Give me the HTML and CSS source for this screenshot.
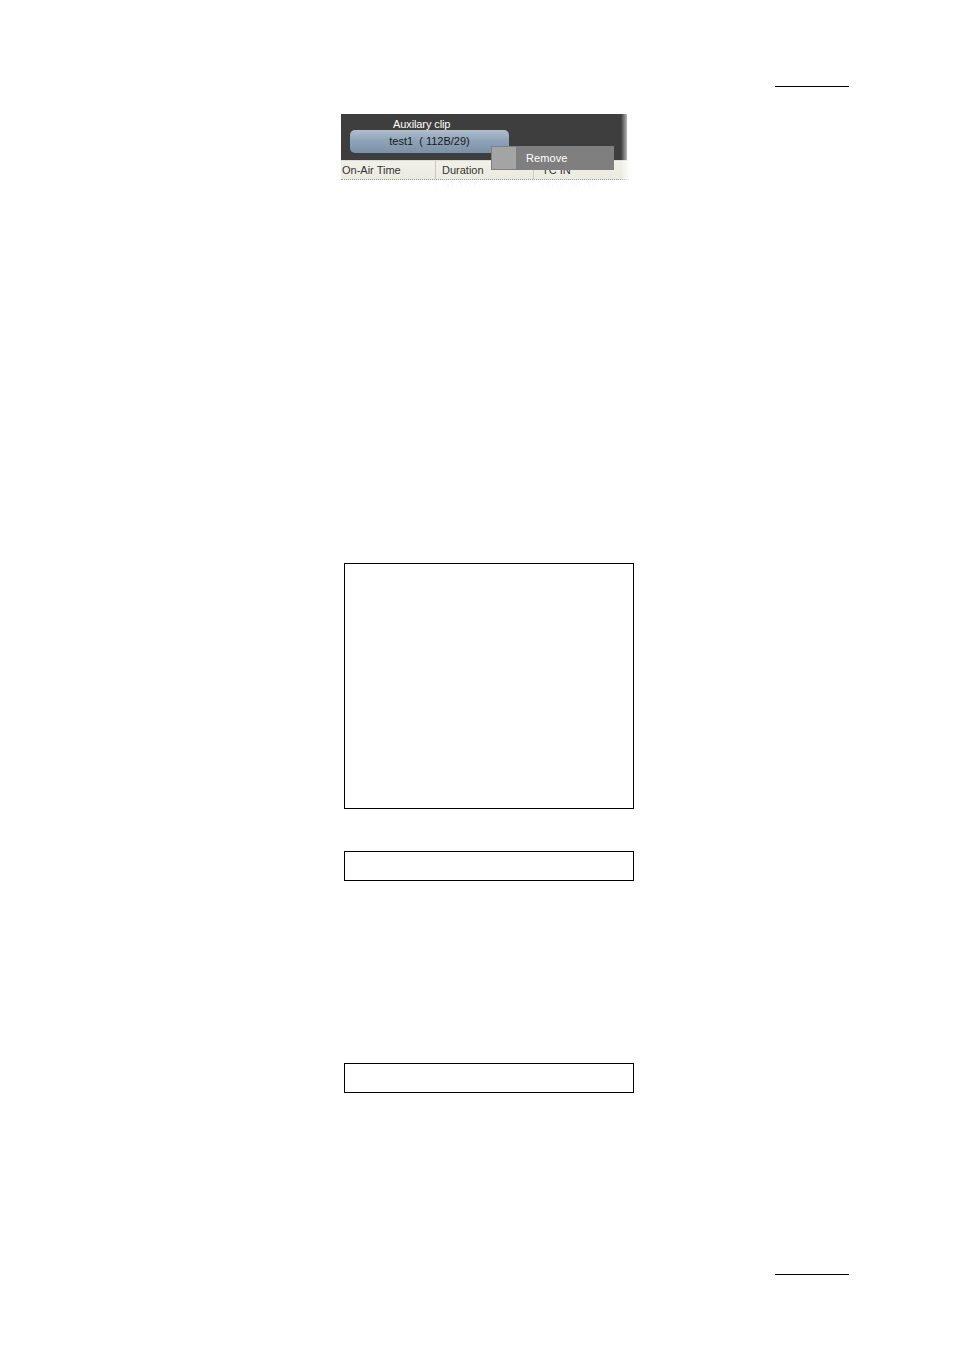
FILE: index.html
```html
<!DOCTYPE html>
<html>
<head>
<meta charset="utf-8">
<link rel="stylesheet" href="styles.css">
</head>
<body>
<div class="page">
  <div class="rule-row top"><div class="rule"></div></div>

  <div class="shot">
    <div class="panel">
      <div class="panel-label">Auxilary clip</div>
      <div class="clip-btn">test1&nbsp; ( 112B/29)</div>
    </div>
    <div class="grid-head">
      <div class="col c1">On-Air Time</div>
      <div class="col c2">Duration</div>
      <div class="col c3">TC IN</div>
    </div>
    <div class="grid-ghost">
      <div class="col c1"></div>
      <div class="col c2">00:00:00</div>
      <div class="col c3">00:00:00:00</div>
    </div>
    <div class="menu">
      <div class="menu-icon"></div>
      <div class="menu-text">Remove</div>
    </div>
    <div class="fade-right"></div>
  </div>

  <div class="box big"></div>
  <div class="box small b2"></div>
  <div class="box small b3"></div>

  <div class="rule-row bottom"><div class="rule"></div></div>
</div>
</body>
</html>
```

FILE: styles.css
```css
html, body {
  margin: 0;
  padding: 0;
  background: #ffffff;
}

.page {
  width: 954px;
  height: 1350px;
  font-family: "Liberation Sans", Arial, sans-serif;
  display: flex;
  flex-direction: column;
}

.rule-row {
  display: flex;
  justify-content: flex-end;
  padding-right: 105px;
}

.rule {
  width: 74px;
  height: 1px;
  background: #000;
}

.rule-row.top {
  margin-top: 86px;
}

.rule-row.bottom {
  margin-top: 181px;
}

/* screenshot */
.shot {
  position: relative;
  margin-top: 27px;
  margin-left: 341px;
  width: 292px;
  height: 77px;
  overflow: hidden;
  font-size: 11px;
}

.panel {
  width: 286px;
  height: 46px;
  box-sizing: border-box;
  padding-top: 4px;
  background: #3e3e3e;
  color: #fff;
}

.panel-label {
  margin-left: 52px;
  line-height: 12px;
  height: 12px;
  letter-spacing: -0.1px;
}

.clip-btn {
  margin-left: 9px;
  width: 159px;
  height: 23px;
  box-sizing: border-box;
  border-radius: 5px;
  background: linear-gradient(#b0bfcd 0%, #8fa4b8 45%, #7a91a7 100%);
  color: #1a1a1a;
  text-align: center;
  line-height: 23px;
  letter-spacing: 0;
}

.grid-head {
  display: flex;
  height: 20px;
  box-sizing: border-box;
  border-top: 1px solid #dcdcd2;
  border-bottom: 1px dotted #9a9a90;
  background: linear-gradient(to bottom, #f1f0e6, #ecebe0);
  color: #333;
  line-height: 19px;
}

.col {
  box-sizing: border-box;
  white-space: nowrap;
}

.c1 { width: 94px; padding-left: 1px; }
.c2 { width: 98px; padding-left: 6px; border-left: 1px solid #c8c8c0; }
.c3 { flex: 1; padding-left: 8px; border-left: 1px solid #c8c8c0; }

.grid-ghost {
  display: flex;
  height: 10px;
  color: #e6e6e6;
  line-height: 12px;
  font-size: 10px;
  overflow: hidden;
  -webkit-mask-image: linear-gradient(to bottom, rgba(0,0,0,0.6), rgba(0,0,0,0));
  mask-image: linear-gradient(to bottom, rgba(0,0,0,0.6), rgba(0,0,0,0));
}

.grid-ghost .c2, .grid-ghost .c3 {
  border-left-color: #f0f0f0;
}

.menu {
  position: absolute;
  left: 150px;
  top: 32px;
  width: 123px;
  height: 24px;
  background: #7f7f7f;
  display: flex;
  align-items: center;
}

.menu-icon {
  margin-left: 1px;
  width: 24px;
  height: 22px;
  background: #a4a4a4;
}

.menu-text {
  margin-left: 10px;
  color: #fff;
  letter-spacing: 0.1px;
}

.fade-right {
  position: absolute;
  top: 0;
  right: 0;
  width: 12px;
  height: 100%;
  background: linear-gradient(to right, rgba(255,255,255,0), #ffffff 80%);
}

/* boxes */
.box {
  margin-left: 344px;
  width: 290px;
  box-sizing: border-box;
  border: 1px solid #000;
}

.box.big {
  margin-top: 372px;
  height: 246px;
}

.box.small {
  height: 30px;
}

.box.b2 {
  margin-top: 42px;
}

.box.b3 {
  margin-top: 182px;
}
```
